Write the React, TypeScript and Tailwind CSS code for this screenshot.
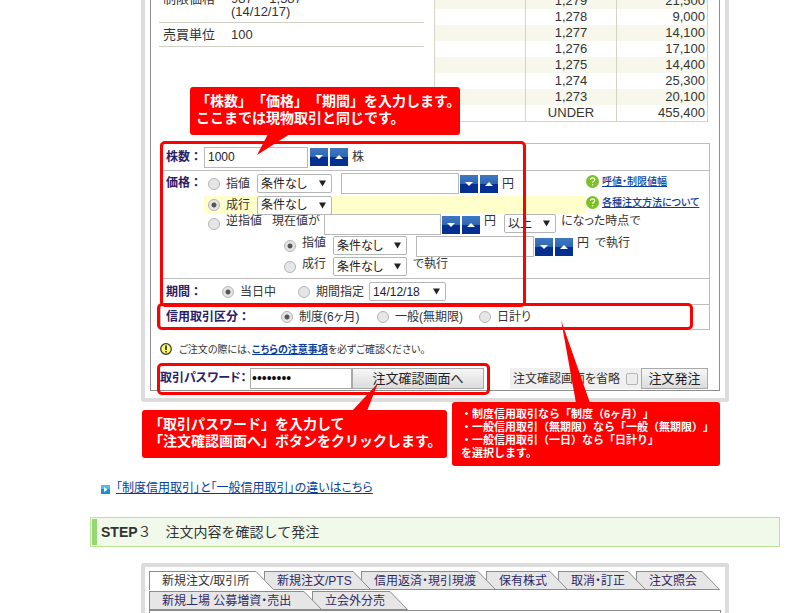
import React from "react";

const CJK = "font-['Liberation_Sans','Noto_Sans_CJK_JP',sans-serif]";

function Radio({ name, label, checked, low }: { name: string; label: string; checked?: boolean; low?: boolean }) {
  return (
    <label className={`flex shrink-0 gap-1.5 leading-[14px] ${low ? "h-4 items-start" : "items-center"}`}>
      <input
        type="radio"
        name={name}
        defaultChecked={checked}
        className={`size-3 shrink-0 appearance-none rounded-full border border-[#b4b4b4] bg-[#e6e6e6] checked:bg-[radial-gradient(circle,#555_0_2px,#e6e6e6_3px)] ${low ? "self-end" : ""}`}
      />
      {label}
    </label>
  );
}

function Select({ label, options, className }: { label: string; options: string[]; className: string }) {
  return (
    <span className={`relative block h-[19px] shrink-0 ${className}`}>
      <select
        aria-label={label}
        className="block h-full w-full appearance-none rounded-[2px] border border-[#b5b5b5] bg-white pl-[3px] text-[12px] leading-[16px] text-[#222]"
      >
        {options.map((o) => (
          <option key={o}>{o}</option>
        ))}
      </select>
      <svg viewBox="0 0 7 7" className="pointer-events-none absolute top-[6px] right-[6px] size-[7px]">
        <path d="M0 0.500h7L3.500 6.500z" fill="#222" />
      </svg>
    </span>
  );
}

function Stepper({ label }: { label: string }) {
  const cls =
    "flex size-[18px] items-center justify-center bg-[linear-gradient(#3f78c0_0%,#2f66b4_50%,#052f94_50%,#04308f_100%)]";
  return (
    <span className="flex h-[21px] shrink-0 items-center gap-0.5">
      <button type="button" aria-label={`${label}を減らす`} className={cls}>
        <svg viewBox="0 0 8 4" className="h-1 w-2">
          <path d="M0 0h8L4 4z" fill="#fff" />
        </svg>
      </button>
      <button type="button" aria-label={`${label}を増やす`} className={cls}>
        <svg viewBox="0 0 8 4" className="h-1 w-2">
          <path d="M0 4h8L4 0z" fill="#fff" />
        </svg>
      </button>
    </span>
  );
}

function Field({ label, value, className }: { label: string; value?: string; className: string }) {
  return (
    <input
      aria-label={label}
      defaultValue={value}
      className={`h-[21px] shrink-0 border border-[#b9b9b9] bg-white px-[3px] text-[12px] text-[#222] ${className}`}
    />
  );
}

function HelpLink({ text }: { text: string }) {
  return (
    <a href="#" className="flex h-[21px] items-center gap-[3px] text-[10px] font-medium whitespace-nowrap text-[#0b3d9c]">
      <svg viewBox="0 0 13 13" className="size-[13px] shrink-0">
        <circle cx="6.500" cy="6.500" r="6.500" fill="#7cc122" />
        <path
          d="M4.400 5c0-1.400 1-2.200 2.200-2.200S8.700 3.600 8.700 4.800c0 1.400-2.100 1.500-2.100 3"
          fill="none"
          stroke="#fff"
          strokeWidth="1.200"
        />
        <circle cx="6.600" cy="9.700" r="0.800" fill="#fff" />
      </svg>
      <span className="underline">{text}</span>
    </a>
  );
}

function Callout({ className, tail, children }: { className: string; tail: string; children: React.ReactNode }) {
  return (
    <div
      className={`absolute rounded-[3px] bg-[#fe0000] font-bold whitespace-nowrap text-white [font-feature-settings:normal] [text-spacing-trim:space-all] ${className}`}
    >
      <svg className="absolute top-0 left-0 size-full overflow-visible">
        <polygon points={tail} fill="#fe0000" />
      </svg>
      <div className="relative">{children}</div>
    </div>
  );
}

function Tab({ text, active, className }: { text: string; active?: boolean; className: string }) {
  const fill = active ? "#ffffff" : "#e6e6e6";
  return (
    <button type="button" className={`relative -mr-[10px] flex h-[19px] shrink-0 ${className}`}>
      <span
        className={`flex h-full flex-1 items-center border-t border-l border-[#8c8c8c] pl-3 text-[12px] leading-[16px] whitespace-nowrap ${
          active ? "bg-white text-[#333]" : "border-b bg-[#e6e6e6] text-[#2d2b66]"
        }`}
      >
        <span className="w-0">{text}</span>
      </span>
      <svg viewBox="0 0 18 19" className="h-[19px] w-[18px] shrink-0">
        <path d="M0 0L18 19H0z" fill={fill} />
        <path d={active ? "M0 0.500L17.500 18.500" : "M0 0.500L17.500 18.500H0"} fill="none" stroke="#8c8c8c" />
      </svg>
    </button>
  );
}

const BOOK: [string, string][] = [
  ["1,279", "21,500"],
  ["1,278", "9,000"],
  ["1,277", "14,100"],
  ["1,276", "17,100"],
  ["1,275", "14,400"],
  ["1,274", "25,300"],
  ["1,273", "20,100"],
  ["UNDER", "455,400"],
];

const CONDITIONS = ["条件なし", "寄指", "引指"];

function RowLabel({ children }: { children: React.ReactNode }) {
  return (
    <span className="block w-[43px] shrink-0 pl-[5px] font-bold whitespace-nowrap text-[#2a2066] [font-feature-settings:normal]">
      {children}
    </span>
  );
}

function OrderForm() {
  return (
    <div className="mx-[9px] border border-[#bdbdbd] text-[12px] leading-[14px] whitespace-nowrap">
      <div className="flex h-[27px] items-center border-b border-[#bdbdbd]">
        <RowLabel>株数：</RowLabel>
        <Field label="株数" value="1000" className="mr-0.5 w-[104px]" />
        <Stepper label="株数" />
        <span className="ml-1">株</span>
      </div>

      <div className="flex h-[108px] border-b border-[#bdbdbd]">
        <div className="w-[43px] shrink-0 pt-[5px]">
          <RowLabel>価格：</RowLabel>
        </div>
        <div className="flex min-w-0 flex-1 flex-col">
          <div className="flex">
            <div className="w-[382px] shrink-0">
              <div className="flex h-[25px] items-center pl-1">
                <Radio name="price" label="指値" />
                <Select label="指値の条件" options={CONDITIONS} className="mr-[9px] ml-[7px] w-[75px]" />
                <Field label="指値価格" className="mr-px w-[118px]" />
                <Stepper label="指値価格" />
                <span className="ml-1">円</span>
              </div>
              <div className="flex h-[18px] items-center bg-[#ffffcc] pl-1">
                <Radio name="price" label="成行" checked />
                <Select label="成行の条件" options={CONDITIONS} className="ml-[7px] w-[75px]" />
              </div>
            </div>
            <div>
              <HelpLink text="呼値・制限値幅" />
              <HelpLink text="各種注文方法について" />
            </div>
          </div>
          <div className="flex h-[22px] items-start pl-1">
            <Radio name="price" label="逆指値" low />
            <span className="ml-[10px] w-[52px]">現在値が</span>
            <Field label="逆指値の現在値" className="mr-px w-[117px]" />
            <Stepper label="逆指値の現在値" />
            <span className="mx-1 w-4">円</span>
            <Select label="比較" options={["以上", "以下"]} className="mr-[5px] w-[52px]" />
            <span>になった時点で</span>
          </div>
          <div className="flex h-[21px] items-start pl-20">
            <Radio name="stop" label="指値" checked low />
            <Select label="執行指値の条件" options={CONDITIONS} className="mr-[9px] ml-[7px] w-[74px]" />
            <Field label="執行価格" className="mr-px w-[118px]" />
            <Stepper label="執行価格" />
            <span className="mr-1.5 ml-1">円</span>
            <span>で執行</span>
          </div>
          <div className="flex h-[21px] items-start pl-20">
            <Radio name="stop" label="成行" low />
            <Select label="執行成行の条件" options={CONDITIONS} className="mr-[6px] ml-[7px] w-[74px]" />
            <span>で執行</span>
          </div>
        </div>
      </div>

      <div className="flex h-[26px] items-center border-b border-[#bdbdbd]">
        <RowLabel>期間：</RowLabel>
        <div className="flex items-center pl-[18px]">
          <Radio name="term" label="当日中" checked />
          <span className="w-[22px]" />
          <Radio name="term" label="期間指定" />
          <Select label="期間" options={["14/12/18", "14/12/19"]} className="ml-[5px] w-[77px]" />
        </div>
      </div>

      <div className="flex h-6 items-center">
        <span className="w-[120px] shrink-0 pl-[5px] font-bold text-[#2a2066] [font-feature-settings:normal]">
          信用取引区分：
        </span>
        <span className="w-24">
          <Radio name="margin" label="制度(6ヶ月)" checked />
        </span>
        <span className="w-[102px]">
          <Radio name="margin" label="一般(無期限)" />
        </span>
        <Radio name="margin" label="日計り" />
      </div>
    </div>
  );
}

export default function App() {
  return (
    <main className={`h-screen overflow-hidden bg-white pr-[19px] pl-[90px] text-[#333] [font-feature-settings:'palt'] ${CJK}`}>
      <figure className="relative ml-[51px] max-w-[588px] rounded-b-[3px] border-4 border-t-0 border-[#dcdcdc] px-[5px] pb-[7px]">
        <div className="border border-t-0 border-[#8f8f8f]">
          <div className="flex h-[143px] items-start pr-[11px] pl-2 text-[13px]">
            <dl className="-mt-2 w-[265px] shrink-0 leading-[13px]">
              <div className="flex h-[31px] border-b border-[#cfcfc4]">
                <dt className="w-[72px] pl-1">制限価格</dt>
                <dd>
                  <span className="block">987～ 1,587</span>
                  <span className="block">(14/12/17)</span>
                </dd>
              </div>
              <div className="flex h-6 items-center border-b border-[#cfcfc4]">
                <dt className="w-[72px] pl-1">売買単位</dt>
                <dd>100</dd>
              </div>
            </dl>
            <table className="-mt-[8px] ml-[10px] flex-1 table-fixed border-collapse border border-[#d3d3c6]">
              <tbody className="table w-full table-fixed">
                {BOOK.map(([price, qty]) => (
                  <tr key={price} className="h-4 odd:bg-[#f7f7ec]">
                    <td className="border-r border-[#d3d3c6] p-0" />
                    <td className="border-r border-[#d3d3c6] p-0 text-center leading-[16px]">{price}</td>
                    <td className="p-0 pr-0.5 text-right leading-[16px]">{qty}</td>
                  </tr>
                ))}
              </tbody>
            </table>
          </div>

          <OrderForm />

          <p className="flex h-[38px] items-center gap-[7px] pl-[9px] text-[10px]">
            <svg viewBox="0 0 12 12" className="size-3">
              <circle cx="6" cy="6" r="5.300" fill="#ffff66" stroke="#333" strokeWidth="1.200" />
              <path d="M6 2.500v4.500M6 8v1.500" stroke="#222" strokeWidth="1.600" />
            </svg>
            <span>
              ご注文の際には、
              <a href="#" className="font-bold text-[#0b3d9c] underline">
                こちらの注意事項
              </a>
              を必ずご確認ください。
            </span>
          </p>

          <div className="flex h-[22px] items-start pr-[11px] pl-[9px] text-[12px] whitespace-nowrap">
            <label htmlFor="pw" className="w-[90px] shrink-0 leading-[20px] font-bold text-[#2a2066]">
              取引パスワード：
            </label>
            <input
              id="pw"
              type="password"
              defaultValue="password"
              className="h-[21px] w-[102px] shrink-0 border border-[#a9a9a9] bg-white px-px text-[14px] text-[#111]"
            />
            <button
              type="button"
              className="h-[21px] w-[132px] shrink-0 border border-[#a9a9a9] bg-gradient-to-b from-[#f6f6f6] to-[#dcdcdc] text-[13px] leading-[18px] text-[#222]"
            >
              注文確認画面へ
            </button>
            <label className="ml-auto flex h-[21px] items-center gap-1.5 bg-[#f0f0f0] pr-[3px] pl-[3px]">
              注文確認画面を省略
              <input
                type="checkbox"
                className="size-3 appearance-none rounded-[2px] border border-[#b4b4b4] bg-[#ececec]"
              />
            </label>
            <button
              type="button"
              className="h-[21px] w-[67px] shrink-0 border border-[#a9a9a9] bg-gradient-to-b from-[#f6f6f6] to-[#dcdcdc] text-[13px] leading-[18px] text-[#222]"
            >
              注文発注
            </button>
          </div>
        </div>

        <div className="pointer-events-none absolute top-[141px] left-[15px] h-[166px] w-[366px] rounded-[5px] border-3 border-[#fe0000]" />
        <div className="pointer-events-none absolute top-[303px] left-[12px] h-[27px] w-[536px] rounded-[5px] border-3 border-[#fe0000]" />
        <div className="pointer-events-none absolute top-[363px] left-[12px] h-[32px] w-[333px] rounded-[5px] border-3 border-[#fe0000]" />

        <Callout
          className="top-[87px] left-[45px] h-12 w-[270px] px-[6px] pt-[6px] text-[14px] leading-[17px]"
          tail="78,47 100,47 67,68"
        >
          「株数」「価格」「期間」を入力します。
          <br />
          ここまでは現物取引と同じです。
        </Callout>
        <Callout
          className="top-[410px] left-[-3px] h-12 w-[305px] px-[7px] pt-[6px] text-[14px] leading-[17px]"
          tail="210,1 225,1 236,-27"
        >
          「取引パスワード」を入力して
          <br />
          「注文確認画面へ」ボタンをクリックします。
        </Callout>
        <Callout
          className="top-[402px] left-[307px] h-16 w-[268px] px-[9px] pt-[6px] text-[11px] leading-[13px]"
          tail="124,1 138,1 109,-82"
        >
          ・制度信用取引なら「制度（6ヶ月）」
          <br />
          ・一般信用取引（無期限）なら「一般（無期限）」
          <br />
          ・一般信用取引（一日）なら「日計り」
          <br />
          を選択します。
        </Callout>
      </figure>

      <p className="mt-[78px] flex h-4 items-center gap-[6px] pl-[11px] text-[12px]">
        <svg viewBox="0 0 9 9" className="mt-0.5 size-[9px]">
          <path d="M0 0h9v9H0z" fill="#1d8fd1" />
          <path d="M0 0h9v4H0z" fill="#58b7e6" />
          <path d="M3 2l3.500 2.500L3 7z" fill="#fff" />
        </svg>
        <a href="#" className="text-[#003e9c] underline">
          「制度信用取引」と「一般信用取引」の違いはこちら
        </a>
      </p>

      <h2 className="mt-[21px] flex h-[30px] items-center gap-1 border border-[#b9e78f] bg-[#f0f9ea] p-px text-[14px] [font-feature-settings:normal]">
        <span className="h-full w-[5px] bg-[#94d873]" />
        <span>
          <b>STEP</b>３　注文内容を確認して発注
        </span>
      </h2>

      <figure className="mt-4 ml-[51px] max-w-[588px] rounded-t-[3px] border-4 border-b-0 border-[#dcdcdc] pt-1 pr-1 pl-1">
        <div className="flex">
          <Tab text="新規注文/取引所" active className="z-6 w-[125px]" />
          <Tab text="新規注文/PTS" className="z-5 w-[107px]" />
          <Tab text="信用返済・現引現渡" className="z-4 w-[135px]" />
          <Tab text="保有株式" className="z-3 w-[82px]" />
          <Tab text="取消・訂正" className="z-2 w-[88px]" />
          <Tab text="注文照会" className="z-1 w-[84px]" />
        </div>
        <div className="mt-px flex">
          <Tab text="新規上場 公募増資・売出" className="z-2 w-[173px]" />
          <Tab text="立会外分売" className="z-1 w-[96px]" />
        </div>
        <div className="h-10 border border-b-0 border-[#8c8c8c]" />
      </figure>
    </main>
  );
}
